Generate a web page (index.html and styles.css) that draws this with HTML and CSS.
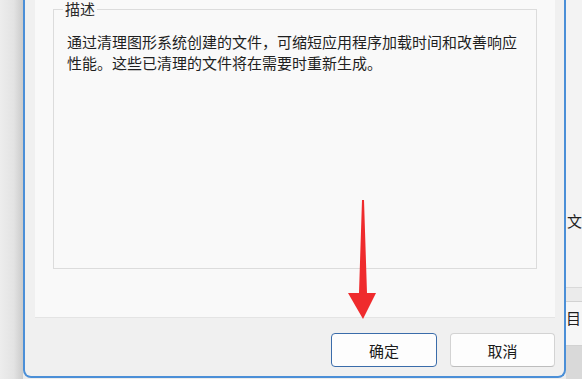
FILE: index.html
```html
<!DOCTYPE html>
<html lang="zh-CN">
<head>
    <meta charset="UTF-8">
    <title>描述</title>
    <link rel="stylesheet" href="styles.css">
</head>
<body>
    <div class="desktop">
        <div class="backdrop-left"></div>

        <div class="dialog">
            <div class="dialog-panel">
                <fieldset class="group-box">
                    <legend>描述</legend>
                    <p class="description">通过清理图形系统创建的文件，可缩短应用程序加载时间和改善响应性能。这些已清理的文件将在需要时重新生成。</p>
                </fieldset>
            </div>
            <div class="dialog-footer">
                <button class="btn btn-primary">确定</button>
                <button class="btn">取消</button>
            </div>
        </div>

        <div class="backdrop-right">
            <div class="behind-top"><span>文</span></div>
            <div class="behind-row"></div>
            <div class="behind-row tall"><span>目</span></div>
            <div class="behind-bottom"></div>
        </div>

        <!-- annotation arrow pointing at the OK button -->
        <svg class="arrow" width="32" height="124" viewBox="0 0 32 124">
            <polygon points="15,2 17,2 20,95 29,95 16,121 1,95 12,95" fill="#ef2b2d"/>
        </svg>
    </div>
</body>
</html>
```

FILE: styles.css
```css
body {
    margin: 0;
    font-family: "Noto Sans CJK SC", "Noto Sans", sans-serif;
    color: #1f1f1f;
    background-color: #ececec;
}

.desktop {
    position: relative;
    display: flex;
    width: 582px;
    height: 379px;
    overflow: hidden;
}

.backdrop-left {
    width: 23px;
    background: linear-gradient(to right, #ededed, #e3e3e3 60%, #cbcbcb);
}

.dialog {
    width: 544px;
    height: 378px;
    box-sizing: border-box;
    border: 2px solid #4b8fd7;
    border-top: 0;
    border-radius: 0 0 8px 8px;
    background-color: #f0f0f0;
    display: flex;
    flex-direction: column;
}

.dialog-panel {
    height: 318px;
    margin: 0 9px 0 10px;
    padding: 2px 18px 0;
    box-sizing: border-box;
    background-color: #f9f9f9;
    border-bottom: 1px solid #e4e4e4;
}

.group-box {
    margin: 0;
    height: 267px;
    box-sizing: border-box;
    border: 1px solid #dcdcdc;
    padding: 0 14px 0 13px;
}

.group-box legend {
    margin-left: -4px;
    padding: 0 2px;
    font-size: 15px;
    line-height: 14px;
    color: #2b2b2b;
}

.description {
    margin: 15px 0 0;
    font-size: 15px;
    line-height: 21px;
}

.dialog-footer {
    flex: 1;
    display: flex;
    justify-content: flex-end;
    align-items: flex-start;
    gap: 13px;
    padding: 15px 9px 0 0;
}

.btn {
    width: 105px;
    height: 34px;
    box-sizing: border-box;
    border: 1px solid #d3d3d3;
    border-bottom-color: #bdbdbd;
    border-radius: 4px;
    background-color: #fdfdfd;
    font-family: inherit;
    font-size: 15px;
    color: #1b1b1b;
    padding: 0;
}

.btn-primary {
    width: 106px;
    border: 1.5px solid #3a6caa;
}

.backdrop-right {
    flex: 1;
    display: flex;
    flex-direction: column;
    background-color: #f3f3f3;
}

.behind-top {
    height: 288px;
    box-sizing: border-box;
    padding-top: 211px;
    border-bottom: 1px solid #d9d9d9;
    font-size: 15px;
    line-height: 20px;
}

.behind-top span,
.behind-row span {
    display: block;
    margin-left: 1px;
    white-space: nowrap;
}

.behind-row {
    height: 13px;
    background-color: #ebebeb;
    border-bottom: 1px solid #d2d2d2;
}

.behind-row.tall {
    height: 44px;
    box-sizing: border-box;
    padding-top: 6px;
    background-color: #f6f6f6;
    font-size: 15px;
    line-height: 20px;
}

.behind-row.tall span {
    margin-left: 0;
}

.behind-bottom {
    flex: 1;
    background-color: #d9d9d9;
}

.arrow {
    position: absolute;
    left: 347px;
    top: 198px;
}
```
